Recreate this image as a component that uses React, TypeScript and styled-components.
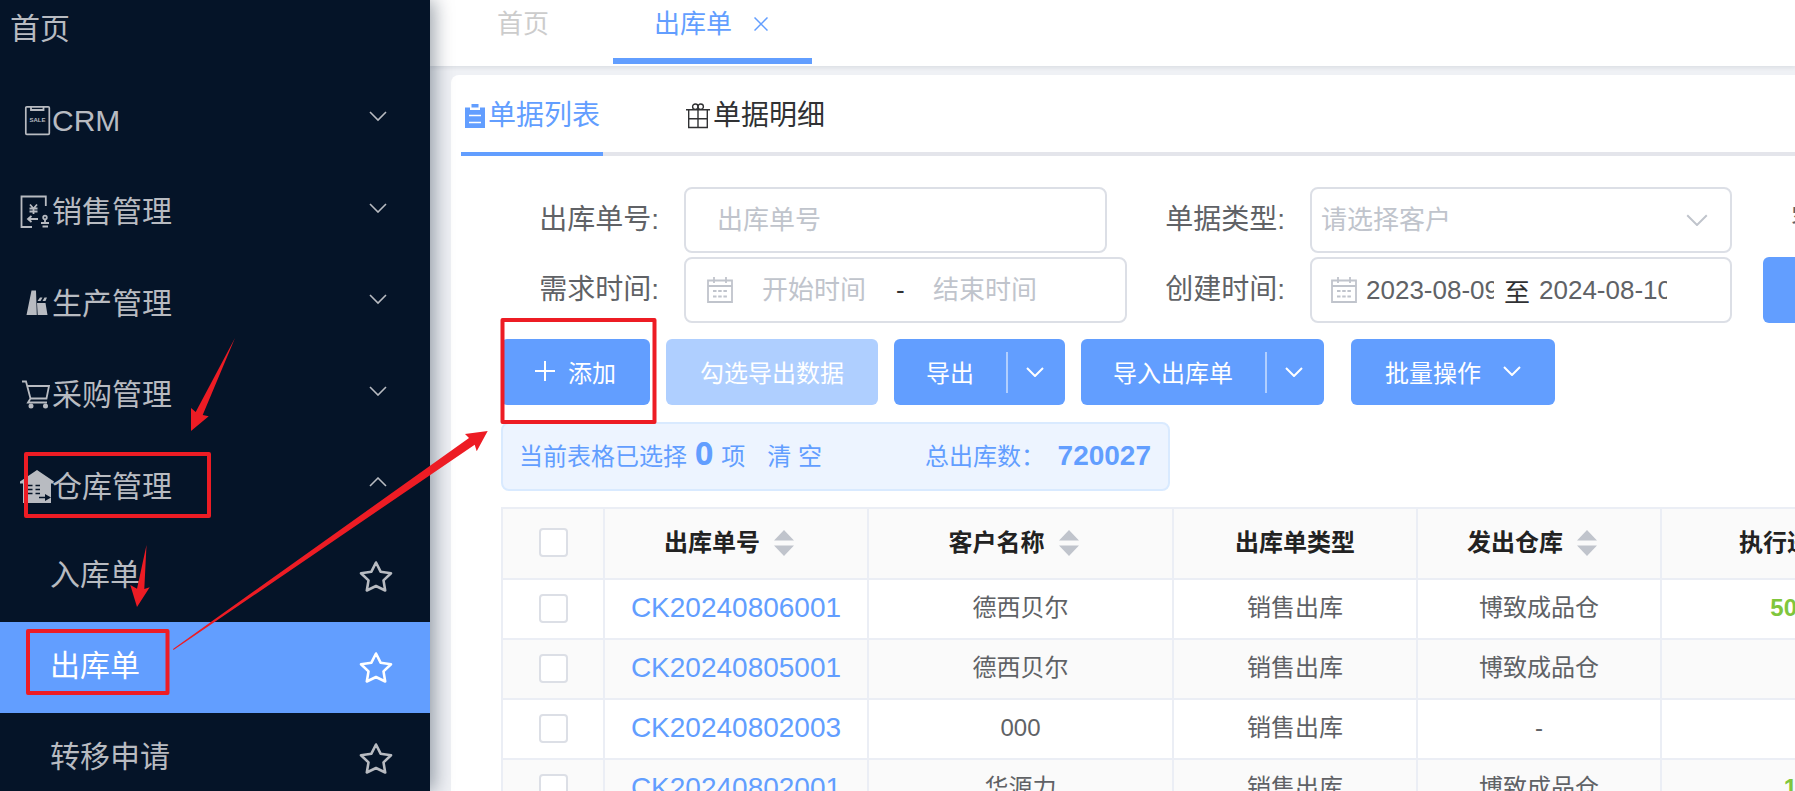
import React from 'react';
import styled, { createGlobalStyle, css } from 'styled-components';

const blue = '#629eff';
const red = '#ed1c24';

const GlobalStyle = createGlobalStyle`
  * { box-sizing: border-box; }
  html, body, #root { height: 100%; }
  body {
    margin: 0;
    overflow: hidden;
    background: #eff1f5;
    font-family: "Liberation Sans", "Noto Sans CJK SC", sans-serif;
    color: #303133;
  }
  button, input, select { font: inherit; }
  ul { margin: 0; padding: 0; list-style: none; }
`;

const Page = styled.div`
  position: relative;
  display: flex;
  height: 100vh;
  overflow: hidden;
`;

/* ---------- side menu ---------- */

const Sidebar = styled.nav`
  flex: 0 0 430px;
  z-index: 1;
  overflow: hidden;
  background: #051428;
  box-shadow: 4px 0 18px rgba(0, 21, 41, 0.4);
`;

const MenuList = styled.ul`
  margin-top: -18px;
`;

const menuRow = css`
  display: flex;
  align-items: center;
  width: 100%;
  border: 0;
  background: none;
  color: #b8bbc1;
  font-size: 30px;
  line-height: 44px;
  text-decoration: none;
  text-align: left;
`;

const HomeLink = styled.a`
  ${menuRow}
  height: 92px;
  padding: 2px 0 0 10px;
`;

const GroupButton = styled.button<{ $tall?: boolean }>`
  ${menuRow}
  height: ${(p) => (p.$tall ? 92 : 91)}px;
  padding: 2px 43px 0 20px;

  > svg:first-child { flex: none; margin-right: -2px; }
  > svg:last-child { margin: 0 0 8px auto; }
`;

const SubRow = styled.li<{ $active?: boolean }>`
  ${menuRow}
  height: 91px;
  padding: 0 37px 0 50px;
  ${(p) => p.$active && css`background: ${blue}; color: #fff;`}
`;

const SubLink = styled.a`
  flex: 1;
  padding-bottom: 3px;
  color: inherit;
  text-decoration: none;
`;

const StarButton = styled.button`
  display: flex;
  padding: 0;
  border: 0;
  background: none;
  color: inherit;
`;

/* ---------- right side ---------- */

const Main = styled.main`
  flex: 1;
  min-width: 0;
  display: flex;
  flex-direction: column;
`;

const TabBar = styled.header`
  display: flex;
  flex: 0 0 66px;
  padding-left: 35px;
  background: #fff;
  box-shadow: 0 2px 4px rgba(0, 21, 41, 0.08);
`;

const PageTab = styled.div<{ $active?: boolean }>`
  display: flex;
  align-items: flex-start;
  height: 64px;
  padding: 5px 42px 0 32px;
  line-height: 38px;
  font-size: 26px;
  color: #ccc;
  a { color: inherit; text-decoration: none; }
  ${(p) => p.$active && css`
    margin-left: 22px;
    padding-left: 41px;
    padding-right: 44px;
    color: ${blue};
    border-bottom: 6px solid ${blue};
  `}
`;

const CloseButton = styled.button`
  display: flex;
  margin: 12px 0 0 22px;
  padding: 0;
  border: 0;
  background: none;
  color: inherit;
`;

const Panel = styled.section`
  flex: 1;
  margin: 9px 0 0 21px;
  padding-left: 10px;
  overflow: hidden;
  background: #fff;
  border-radius: 8px 0 0 0;
`;

const SubTabs = styled.div`
  display: flex;
  gap: 83px;
  height: 81px;
  box-shadow: inset 0 -4px 0 #e4e5eb;
`;

const SubTab = styled.button<{ $active?: boolean }>`
  display: flex;
  align-items: center;
  padding: 4px 0 4px;
  border: 0;
  background: none;
  font-size: 28px;
  line-height: 40px;
  color: ${(p) => (p.$active ? blue : '#303133')};
  ${(p) => p.$active && css`
    width: 142px;
    padding-left: 4px;
    padding-bottom: 0;
    border-bottom: 4px solid ${blue};
  `}
  svg { flex: none; margin-right: 3px; }
`;

const Content = styled.div`
  padding: 31px 0 0 40px;
`;

const Filters = styled.form`
  display: grid;
  grid-template-columns: repeat(3, 626px);
  row-gap: 4px;
`;

const Field = styled.div`
  display: flex;
  align-items: center;
  height: 66px;
  > label {
    flex: 0 0 183px;
    padding-right: 25px;
    text-align: right;
    font-size: 28px;
    line-height: 40px;
    white-space: nowrap;
    color: #606266;
  }
`;

const controlBox = css`
  height: 66px;
  border: 2px solid #dcdfe6;
  border-radius: 8px;
  background: #fff;
  color: #606266;
  font-size: 26px;
  outline: none;
  &::placeholder { color: #c0c4cc; opacity: 1; }
`;

const TextBox = styled.input`
  ${controlBox}
  width: 423px;
  padding: 0 31px;
`;

const SelectBox = styled.div`
  ${controlBox}
  display: flex;
  align-items: center;
  width: 422px;
  padding-right: 22px;
  color: #c0c4cc;
  select {
    flex: 1;
    height: 100%;
    padding: 0 9px;
    border: 0;
    background: none;
    color: inherit;
    appearance: none;
    outline: none;
  }
`;

const DateRange = styled.div<{ $wide?: boolean }>`
  ${controlBox}
  display: flex;
  align-items: center;
  width: ${(p) => (p.$wide ? 443 : 422)}px;
  padding-left: ${(p) => (p.$wide ? 21 : 19)}px;
  color: #303133;
  svg { flex: none; color: #c0c4cc; }
  input {
    width: ${(p) => (p.$wide ? 146 : 128)}px;
    margin-left: ${(p) => (p.$wide ? 8 : 9)}px;
    padding: 0;
    border: 0;
    background: none;
    color: #606266;
    text-align: ${(p) => (p.$wide ? 'center' : 'left')};
    outline: none;
    &::placeholder { color: #c0c4cc; opacity: 1; }
  }
  span { width: ${(p) => (p.$wide ? 8 : 26)}px; margin-left: ${(p) => (p.$wide ? 9 : 10)}px; }
`;

const SearchButton = styled.button`
  width: 150px;
  height: 66px;
  margin-left: 10px;
  border: 0;
  border-radius: 6px;
  background: ${blue};
  color: #fff;
  font-size: 24px;
`;

const Toolbar = styled.div`
  display: flex;
  gap: 16px;
  margin-top: 16px;
`;

const ToolButton = styled.button<{ $gap?: number }>`
  display: flex;
  align-items: center;
  gap: ${(p) => p.$gap ?? 0}px;
  height: 66px;
  padding: 0 34px 2px;
  border: 0;
  border-radius: 6px;
  background: ${blue};
  color: #fff;
  font-size: 24px;
  white-space: nowrap;
  &:disabled { background: #afcfff; }
`;

const SplitButton = styled.div`
  display: flex;
  ${ToolButton} { border-radius: 6px 0 0 6px; padding: 0 32px 2px; }
`;

const SplitArrow = styled.button`
  display: flex;
  align-items: center;
  width: 59px;
  padding: 0;
  border: 0;
  border-radius: 0 6px 6px 0;
  background: ${blue};
  color: #fff;
  &::before {
    content: '';
    width: 2px;
    height: 41px;
    margin-right: 18px;
    background: rgba(255, 255, 255, 0.5);
  }
`;

const BatchSlot = styled.div`
  margin-left: 11px;
`;

const Summary = styled.div`
  display: flex;
  align-items: center;
  width: 669px;
  height: 69px;
  margin-top: 17px;
  padding: 0 17px 0 16px;
  border: 2px solid #d9eaff;
  border-radius: 8px;
  background: #edf4ff;
  color: ${blue};
  font-size: 24px;
  line-height: 36px;
  white-space: nowrap;
  b {
    font-size: 28px;
    margin-left: auto;
    padding-bottom: 2px;
  }
`;

const SelectedCount = styled.strong`
  margin: 0 8px;
  padding-bottom: 8px;
  font-family: "Open Sans", sans-serif;
  font-size: 32px;
`;

const ClearLink = styled.a`
  margin: 0 103px 0 22px;
  color: inherit;
  text-decoration: none;
`;

const Table = styled.table`
  table-layout: fixed;
  width: 1461px;
  margin-top: 16px;
  border-spacing: 0;
  border-top: 2px solid #ebeef5;
  border-left: 2px solid #ebeef5;
  font-size: 24px;
  th, td {
    padding: 0 0 2px;
    border-right: 2px solid #ebeef5;
    border-bottom: 2px solid #ebeef5;
    text-align: center;
    line-height: 36px;
    white-space: nowrap;
  }
  th { height: 71px; background: #fafafa; color: #222; }
  td { height: 60px; color: #606266; }
  tbody tr:nth-child(even) { background: #fafafa; }
`;

const HeadCell = styled.span`
  display: inline-flex;
  align-items: center;
`;

const SortButton = styled.button`
  display: flex;
  justify-content: center;
  width: 48px;
  padding: 0;
  border: 0;
  background: none;
  color: #c0c4cc;
`;

const OrderLink = styled.a`
  color: ${blue};
  font-size: 28px;
  text-decoration: none;
`;

const Percent = styled.b`
  color: #7fc63c;
`;

const Check = styled.input`
  appearance: none;
  display: block;
  width: 29px;
  height: 29px;
  margin: 0 auto;
  border: 2px solid #dcdfe6;
  border-radius: 4px;
  background: #fff;
`;

const Annotations = styled.svg`
  position: absolute;
  inset: 0 auto auto 0;
  z-index: 2;
  pointer-events: none;
`;

/* ---------- icons ---------- */

const Chevron = ({ up = false, size = 18, weight = 2 }: { up?: boolean; size?: number; weight?: number }) => (
  <svg width={size} height={size * 0.56} viewBox="0 0 18 10" fill="none" stroke="currentColor" strokeWidth={weight}>
    <path d={up ? 'M1 9 9 1l8 8' : 'M1 1l8 8 8-8'} />
  </svg>
);

const Star = () => (
  <svg width="34" height="34" viewBox="0 0 34 34" fill="none" stroke="currentColor" strokeWidth="2.6" strokeLinejoin="round">
    <path d="M17 2.500l4.600 9.200 10.400 1.500-7.500 7.200 1.700 10.100L17 26l-9.200 4.500 1.700-10.100L2 13.200l10.400-1.500z" />
  </svg>
);

const CrmIcon = () => (
  <svg width="34" height="34" viewBox="0 0 34 34" fill="none" stroke="currentColor" strokeWidth="1.700">
    <rect x="5.800" y="2.800" width="23.500" height="27.500" rx="1" />
    <path d="M11 3v3h12.500V3" strokeWidth="1.800" />
    <text x="17.500" y="18" textAnchor="middle" fontSize="6" fontWeight="700" fill="currentColor" stroke="none">SALE</text>
  </svg>
);

const SalesIcon = () => (
  <svg width="34" height="34" viewBox="0 0 34 34" fill="none" stroke="currentColor" strokeWidth="1.800">
    <path d="M12 32H1.500V1.500h24.300v9.500" />
    <path d="M10 9.500l3.500 4 3.500-4M13.500 13.500v5.500M9.500 13.500h8M9.500 16.500h8M8 24h10M11.500 21L8 24l3.500 3" />
    <circle cx="25" cy="22.500" r="1.800" />
    <path d="M25 24v3.500M21 28h8M22.500 31.500h5.500" />
  </svg>
);

const FactoryIcon = () => (
  <svg width="34" height="34" viewBox="0 0 34 34" fill="currentColor">
    <path d="M11.500 3.500h4.500l.8 24.500H6.500zM17 16h8.500l2 12h-9.800z" />
    <path d="M17.500 14l2.500-3.500h2.500L20.500 14zM22.500 14l2-3.500H27L25.500 14z" />
  </svg>
);

const CartIcon = () => (
  <svg width="34" height="34" viewBox="0 0 34 34" fill="none" stroke="currentColor" strokeWidth="1.800">
    <path d="M2 3.500h4L10.500 20.500h16L29 8H7.500M10.500 20.500L8 24.500h19" />
    <circle cx="11" cy="28" r="1.600" fill="currentColor" />
    <circle cx="25.500" cy="28" r="1.600" fill="currentColor" />
  </svg>
);

const WarehouseIcon = () => (
  <svg width="34" height="34" viewBox="0 0 34 34" fill="currentColor">
    <path d="M17 0l17 11.500-1 2h-2V33H3V13.500H0v-2z" />
    <path d="M8 15.500h4.500M15.500 15.500h4.500M8 19.500h4.500M15.500 19.500h4.500M8 23.500h4.500M15.500 23.500h4.500M19 27.500h9" stroke="#051428" strokeWidth="1.600" fill="none" />
    <path d="M25 24l6 3.500-6 3.500z" fill="#051428" />
  </svg>
);

const ListIcon = () => (
  <svg width="20" height="24" viewBox="0 0 20 24" fill="currentColor">
    <path d="M0 3.500h5V6h10V3.500h5V24H0z" />
    <path d="M6.500 0h7v3.500h-7z" />
    <path d="M4 11.500h12M4 18.500h12" stroke="#fff" strokeWidth="1.500" />
  </svg>
);

const GiftIcon = () => (
  <svg width="24" height="26" viewBox="0 0 24 26" fill="none" stroke="currentColor" strokeWidth="1.400">
    <path d="M0 6.700h24M2.700 6.700V24.500h18.600V6.700M2.700 15.700h18.600M12 6.700v17.800" />
    <circle cx="9.300" cy="3.700" r="2.700" />
    <circle cx="14.700" cy="3.700" r="2.700" />
  </svg>
);

const CalendarIcon = () => (
  <svg width="26" height="26" viewBox="0 0 26 26" fill="none" stroke="currentColor" strokeWidth="1.800">
    <path d="M1 3.500h24V25H1zM1 9h24M7 0v6M19 0v6" />
    <path d="M6 14h14M6 19.500h14" strokeDasharray="3.500 1.700" />
  </svg>
);

const CloseIcon = () => (
  <svg width="14" height="14" viewBox="0 0 14 14" stroke="currentColor" strokeWidth="1.500">
    <path d="M.5.5l13 13M13.500.5l-13 13" />
  </svg>
);

const PlusIcon = () => (
  <svg width="20" height="20" viewBox="0 0 20 20" stroke="currentColor" strokeWidth="2">
    <path d="M10 0v20M0 10h20" />
  </svg>
);

const SortIcon = () => (
  <svg width="20" height="26" viewBox="0 0 20 26" fill="currentColor">
    <path d="M10 0l10 10.500H0zM10 26L0 15.500h20z" />
  </svg>
);

/* ---------- data ---------- */

const groups = [
  { label: 'CRM', Icon: CrmIcon },
  { label: '销售管理', Icon: SalesIcon, tall: true },
  { label: '生产管理', Icon: FactoryIcon },
  { label: '采购管理', Icon: CartIcon, tall: true },
  { label: '仓库管理', Icon: WarehouseIcon, open: true },
];

const subItems = ['入库单', '出库单', '转移申请'];

const columns = [
  { label: '出库单号', width: 264, sortable: true },
  { label: '客户名称', width: 305, sortable: true },
  { label: '出库单类型', width: 244 },
  { label: '发出仓库', width: 244, sortable: true },
  { label: '执行进度', width: 300, sortable: true },
];

const orders = [
  { id: 'CK20240806001', customer: '德西贝尔', type: '销售出库', store: '博致成品仓', progress: '50.00%' },
  { id: 'CK20240805001', customer: '德西贝尔', type: '销售出库', store: '博致成品仓', progress: '0' },
  { id: 'CK20240802003', customer: '000', type: '销售出库', store: '-', progress: '0' },
  { id: 'CK20240802001', customer: '华源力', type: '销售出库', store: '博致成品仓', progress: '1.5%' },
];

export default function App() {
  return (
    <Page>
      <GlobalStyle />
      <Sidebar>
        <MenuList>
          <li><HomeLink href="#home">首页</HomeLink></li>
          {groups.map(({ label, Icon, tall, open }) => (
            <li key={label}>
              <GroupButton $tall={tall} aria-expanded={!!open}>
                <Icon />
                {label}
                <Chevron up={open} weight={1.6} />
              </GroupButton>
            </li>
          ))}
          {subItems.map((label) => (
            <SubRow key={label} $active={label === '出库单'}>
              <SubLink href="#menu">{label}</SubLink>
              <StarButton aria-label={`收藏${label}`}><Star /></StarButton>
            </SubRow>
          ))}
        </MenuList>
      </Sidebar>

      <Main>
        <TabBar>
          <PageTab><a href="#home">首页</a></PageTab>
          <PageTab $active>
            <a href="#out">出库单</a>
            <CloseButton aria-label="关闭"><CloseIcon /></CloseButton>
          </PageTab>
        </TabBar>

        <Panel>
          <SubTabs>
            <SubTab $active><ListIcon />单据列表</SubTab>
            <SubTab><GiftIcon />单据明细</SubTab>
          </SubTabs>

          <Content>
            <Filters>
              <Field>
                <label htmlFor="order-no">出库单号:</label>
                <TextBox id="order-no" placeholder="出库单号" />
              </Field>
              <Field>
                <label htmlFor="order-type">单据类型:</label>
                <SelectBox>
                  <select id="order-type"><option>请选择客户</option></select>
                  <Chevron size={22} weight={1.6} />
                </SelectBox>
              </Field>
              <Field>
                <label htmlFor="customer">客户名称:</label>
                <TextBox id="customer" />
              </Field>
              <Field>
                <label htmlFor="need-from">需求时间:</label>
                <DateRange $wide>
                  <CalendarIcon />
                  <input id="need-from" placeholder="开始时间" />
                  <span>-</span>
                  <input aria-label="结束时间" placeholder="结束时间" />
                </DateRange>
              </Field>
              <Field>
                <label htmlFor="created-from">创建时间:</label>
                <DateRange>
                  <CalendarIcon />
                  <input id="created-from" defaultValue="2023-08-09" />
                  <span>至</span>
                  <input aria-label="创建结束时间" defaultValue="2024-08-10" />
                </DateRange>
              </Field>
              <Field><SearchButton type="button" aria-label="查询" /></Field>
            </Filters>

            <Toolbar>
              <ToolButton $gap={13}><PlusIcon />添加</ToolButton>
              <ToolButton disabled>勾选导出数据</ToolButton>
              <SplitButton>
                <ToolButton>导出</ToolButton>
                <SplitArrow aria-label="更多导出"><Chevron /></SplitArrow>
              </SplitButton>
              <SplitButton>
                <ToolButton>导入出库单</ToolButton>
                <SplitArrow aria-label="更多导入"><Chevron /></SplitArrow>
              </SplitButton>
              <BatchSlot>
                <ToolButton $gap={22}>批量操作<Chevron /></ToolButton>
              </BatchSlot>
            </Toolbar>

            <Summary>
              当前表格已选择<SelectedCount>0</SelectedCount>项
              <ClearLink href="#clear">清 空</ClearLink>
              总出库数：<b>720027</b>
            </Summary>

            <Table>
              <colgroup>
                <col style={{ width: 102 }} />
                {columns.map((c) => <col key={c.label} style={{ width: c.width }} />)}
              </colgroup>
              <thead>
                <tr>
                  <th><Check type="checkbox" aria-label="全选" /></th>
                  {columns.map((c) => (
                    <th key={c.label}>
                      <HeadCell>
                        {c.label}
                        {c.sortable && <SortButton aria-label={`按${c.label}排序`}><SortIcon /></SortButton>}
                      </HeadCell>
                    </th>
                  ))}
                </tr>
              </thead>
              <tbody>
                {orders.map((o) => (
                  <tr key={o.id}>
                    <td><Check type="checkbox" aria-label={`选择${o.id}`} /></td>
                    <td><OrderLink href="#order">{o.id}</OrderLink></td>
                    <td>{o.customer}</td>
                    <td>{o.type}</td>
                    <td>{o.store}</td>
                    <td><Percent>{o.progress}</Percent></td>
                  </tr>
                ))}
              </tbody>
            </Table>
          </Content>
        </Panel>
      </Main>

      <Annotations width="660" height="700" viewBox="0 0 660 700" aria-hidden="true">
        <g fill="none" stroke={red} strokeWidth="4" strokeLinejoin="round">
          <rect x="26" y="454" width="183" height="62" />
          <rect x="28" y="631" width="139.500" height="62" />
          <rect x="502.500" y="320" width="152" height="102" />
        </g>
        <g fill={red}>
          <path d="M235 338L202.700 415l6 1.300L191 431v-23l4.700 4z" />
          <path d="M146.500 545l-2.200 44 5.400-1.700L137 607l-6.700-22 6.700 3.700z" />
          <path d="M173 649L469 438l-4-4 22.700-3-11 20.300-2-6.600L173.500 650z" />
        </g>
      </Annotations>
    </Page>
  );
}
